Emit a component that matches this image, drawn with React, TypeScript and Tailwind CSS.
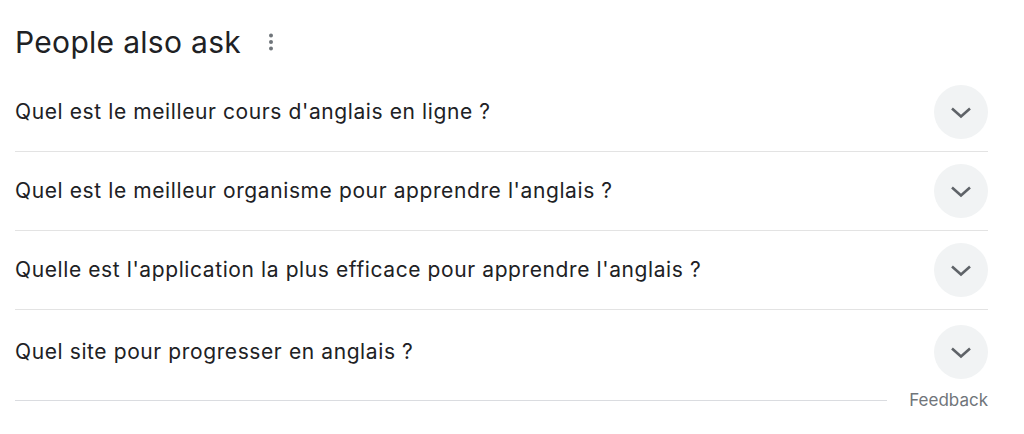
import React from 'react';

const questions = [
  "Quel est le meilleur cours d'anglais en ligne ?",
  "Quel est le meilleur organisme pour apprendre l'anglais ?",
  "Quelle est l'application la plus efficace pour apprendre l'anglais ?",
  'Quel site pour progresser en anglais ?',
];

const Chevron = () => (
  <svg viewBox="0 0 24 24" className="w-6 h-6" fill="none" stroke="#5f6368" strokeWidth="2.6">
    <path d="M3 8.5 12 16.5 21 8.5" />
  </svg>
);

const Dots = () => (
  <svg viewBox="0 0 24 24" className="w-6 h-6" fill="#70757a">
    <circle cx="12" cy="5.5" r="2" />
    <circle cx="12" cy="12" r="2" />
    <circle cx="12" cy="18.5" r="2" />
  </svg>
);

export default function App() {
  return (
    <div className="bg-white w-[1024px] h-[434px] px-[15px] pt-[22px] font-['Inter',_'Liberation_Sans',_sans-serif] text-[#202124]">
      <div className="w-[973px]">
        <div className="flex items-center h-[40px] gap-[18px]">
          <h2 className="text-[30px] leading-[40px] tracking-[0.3px]">People also ask</h2>
          <Dots />
        </div>
        <div className="mt-[11px]">
          {questions.map((q, i) => (
            <div
              key={q}
              className={`flex items-center justify-between h-[79px] ${i < questions.length - 1 ? 'border-b border-[#e3e3e3]' : 'pt-[4px]'}`}
            >
              <span className="text-[21px] tracking-[0.6px]">{q}</span>
              <div className="w-[54px] h-[54px] rounded-full bg-[#f1f3f4] flex items-center justify-center">
                <Chevron />
              </div>
            </div>
          ))}
        </div>
        <div className="flex items-center gap-[22px] -mt-[1px]">
          <div className="flex-1 h-px bg-[#dadce0]" />
          <span className="text-[17px] text-[#70757a]">Feedback</span>
        </div>
      </div>
    </div>
  );
}
